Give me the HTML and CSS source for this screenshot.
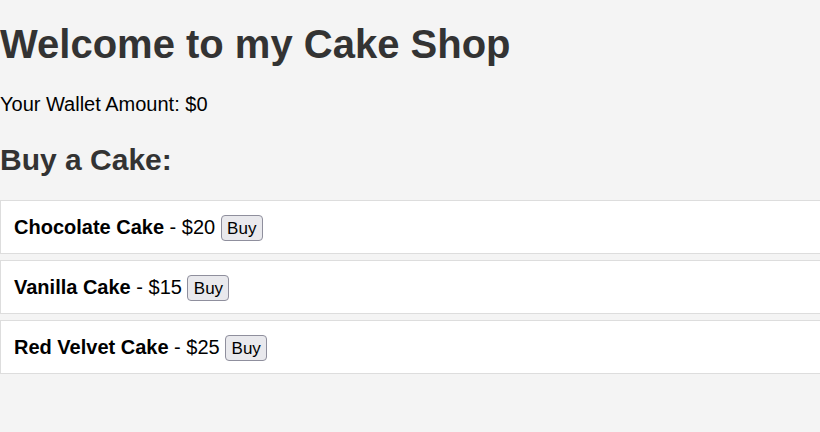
FILE: index.html
```html
<!DOCTYPE html>
<html>
<head>
<meta charset="utf-8">
<link rel="stylesheet" href="styles.css">
</head>
<body>
<h1 class="title">Welcome to my Cake Shop</h1>
<p class="wallet">Your Wallet Amount: $0</p>
<h2 class="subtitle">Buy a Cake:</h2>
<ul class="cakes">
  <li class="cake"><strong>Chocolate Cake</strong> - $20 <button class="buy">Buy</button></li>
  <li class="cake"><strong>Vanilla Cake</strong> - $15 <button class="buy">Buy</button></li>
  <li class="cake"><strong>Red Velvet Cake</strong> - $25 <button class="buy">Buy</button></li>
</ul>
</body>
</html>
```
FILE: styles.css
```css
html, body {
  margin: 0;
  padding: 0;
  background: #f4f4f4;
  font-family: "Liberation Sans", Arial, sans-serif;
  font-size: 20px;
  color: #000;
  overflow: hidden;
}
.title {
  font-size: 40px;
  color: #333;
  margin: 21px 0 0;
  line-height: 46px;
}
.wallet {
  margin: 26px 0 0;
  line-height: 23px;
}
.subtitle {
  font-size: 30px;
  color: #333;
  margin: 26px 0 0;
  line-height: 35px;
}
.cakes {
  list-style: none;
  margin: 23px 0 0;
  padding: 0;
  display: flex;
  flex-direction: column;
  gap: 6px;
}
.cake {
  background: #fff;
  border: 1px solid #ddd;
  width: 100%;
  padding: 0 13px;
  height: 52px;
  display: flex;
  align-items: center;
  white-space: pre;
}
.buy {
  font-family: "Liberation Sans", Arial, sans-serif;
  font-size: 17px;
  margin: 1px 0 0;
  padding: 3px 5px 0;
  height: 26px;
  width: 42px;
  background: #e9e9ed;
  border: 1px solid #8f8f9d;
  border-radius: 4px;
  color: #000;
}
```
